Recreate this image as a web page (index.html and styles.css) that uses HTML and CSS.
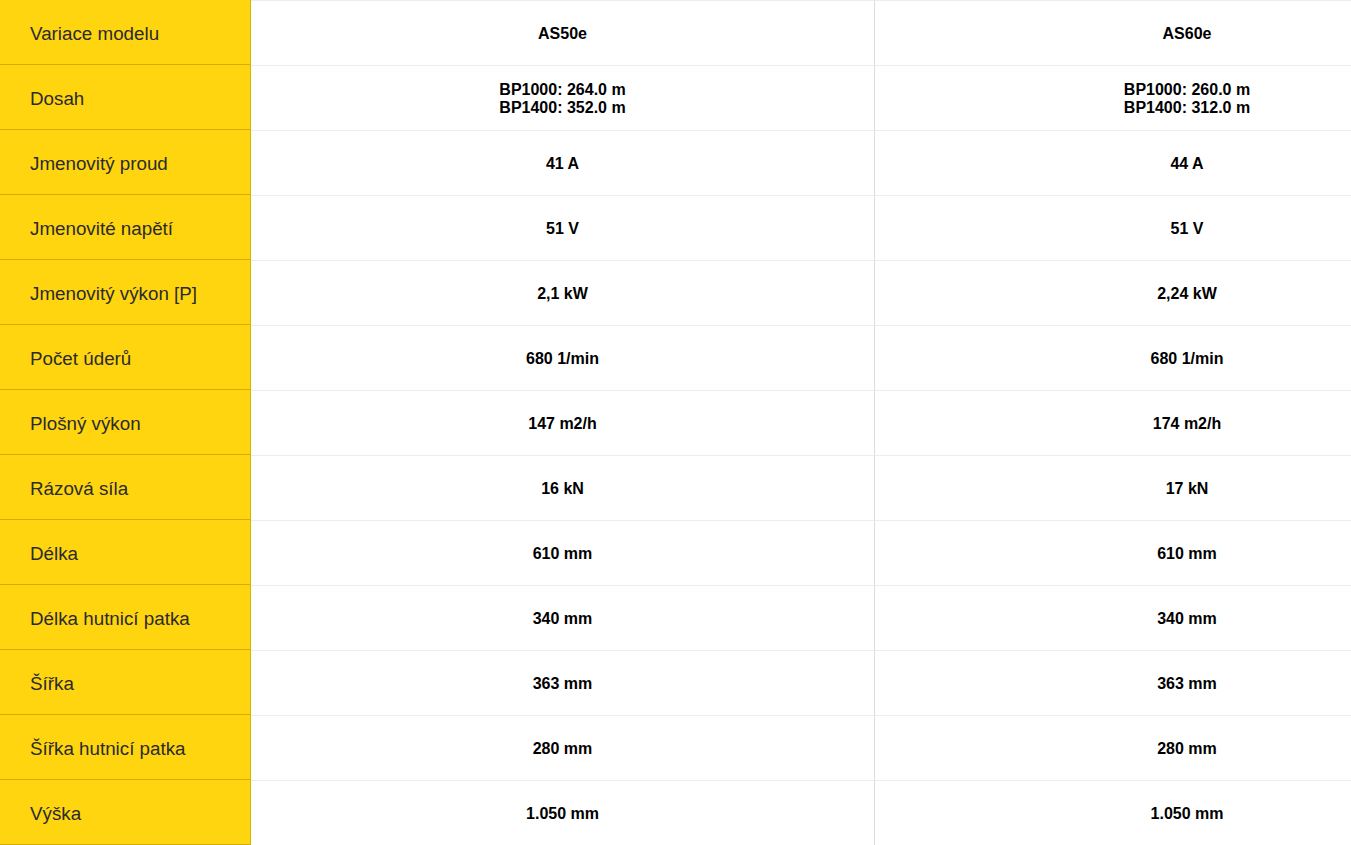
FILE: index.html
```html
<!DOCTYPE html>
<html lang="cs">
<head>
<meta charset="utf-8">
<title>Technické údaje</title>
<link rel="stylesheet" href="styles.css">
</head>
<body>
<div class="viewport">
  <div class="spec-table">
    <div class="label">Variace modelu</div><div class="val">AS50e</div><div class="val last">AS60e</div>
    <div class="label">Dosah</div><div class="val">BP1000: 264.0 m<br>BP1400: 352.0 m</div><div class="val last">BP1000: 260.0 m<br>BP1400: 312.0 m</div>
    <div class="label">Jmenovitý proud</div><div class="val">41 A</div><div class="val last">44 A</div>
    <div class="label">Jmenovité napětí</div><div class="val">51 V</div><div class="val last">51 V</div>
    <div class="label">Jmenovitý výkon [P]</div><div class="val">2,1 kW</div><div class="val last">2,24 kW</div>
    <div class="label">Počet úderů</div><div class="val">680 1/min</div><div class="val last">680 1/min</div>
    <div class="label">Plošný výkon</div><div class="val">147 m2/h</div><div class="val last">174 m2/h</div>
    <div class="label">Rázová síla</div><div class="val">16 kN</div><div class="val last">17 kN</div>
    <div class="label">Délka</div><div class="val">610 mm</div><div class="val last">610 mm</div>
    <div class="label">Délka hutnicí patka</div><div class="val">340 mm</div><div class="val last">340 mm</div>
    <div class="label">Šířka</div><div class="val">363 mm</div><div class="val last">363 mm</div>
    <div class="label">Šířka hutnicí patka</div><div class="val">280 mm</div><div class="val last">280 mm</div>
    <div class="label">Výška</div><div class="val">1.050 mm</div><div class="val last">1.050 mm</div>
  </div>
</div>
</body>
</html>
```
FILE: styles.css
```css
html, body {
  margin: 0;
  padding: 0;
  background: #fff;
}
.viewport {
  width: 1351px;
  height: 845px;
  overflow: hidden;
}
.spec-table {
  display: grid;
  grid-template-columns: 251px 624px 624px;
  grid-auto-rows: 65px;
  width: 1499px;
  font-family: "Liberation Sans", Arial, sans-serif;
}
.label {
  box-sizing: border-box;
  background: #ffd510;
  border-right: 1px solid #d9b300;
  border-bottom: 1px solid #d3ae00;
  padding: 3px 0 0 30px;
  display: flex;
  align-items: center;
  font-size: 18.8px;
  color: #2b2b2b;
}
.val {
  box-sizing: border-box;
  border-top: 1px solid #ececec;
  border-right: 1px solid #dcdcdc;
  padding-top: 2px;
  display: flex;
  align-items: center;
  justify-content: center;
  text-align: center;
  font-size: 16px;
  line-height: 18px;
  font-weight: bold;
  color: #000;
}
.val.last {
  border-right: none;
}
```
